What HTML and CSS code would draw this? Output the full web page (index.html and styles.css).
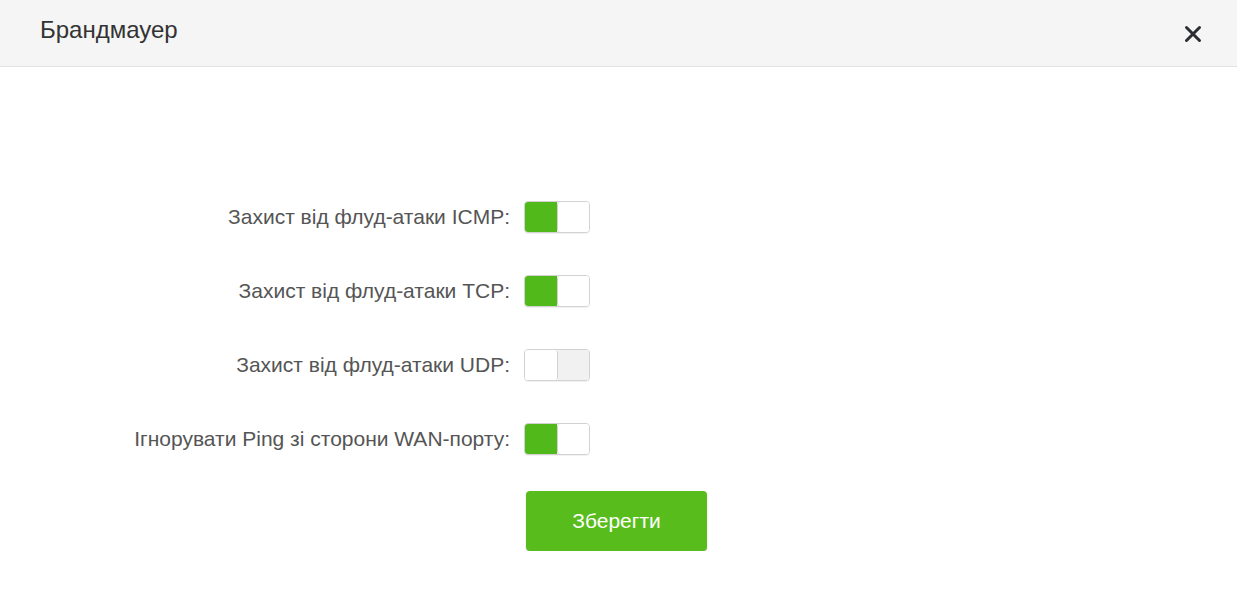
FILE: index.html
```html
<!DOCTYPE html>
<html lang="uk">
<head>
  <meta charset="UTF-8" />
  <title>Брандмауер</title>
  <link rel="stylesheet" href="styles.css">
</head>
<body>
  <div class="dialog">
    <div class="dialog-header">
      <h1 class="dialog-title">Брандмауер</h1>
      <button class="close-btn" aria-label="Закрити">
        <svg width="18" height="18" viewBox="0 0 18 18">
          <path d="M2.5 2.5 L15.5 15.5 M15.5 2.5 L2.5 15.5" stroke="#2b2f33" stroke-width="3" stroke-linecap="round" />
        </svg>
      </button>
    </div>

    <div class="form">
      <label class="form-label">Захист від флуд-атаки ICMP:</label>
      <div class="switch on"><span class="knob-left"></span><span class="knob-right"></span></div>

      <label class="form-label">Захист від флуд-атаки TCP:</label>
      <div class="switch on"><span class="knob-left"></span><span class="knob-right"></span></div>

      <label class="form-label">Захист від флуд-атаки UDP:</label>
      <div class="switch"><span class="knob-left"></span><span class="knob-right"></span></div>

      <label class="form-label">Ігнорувати Ping зі сторони WAN-порту:</label>
      <div class="switch on"><span class="knob-left"></span><span class="knob-right"></span></div>

      <span></span>
      <button class="save-btn">Зберегти</button>
    </div>
  </div>
</body>
</html>
```

FILE: styles.css
```css
body {
  margin: 0;
  font-family: "Liberation Sans", Arial, sans-serif;
  background: #fff;
  color: #333;
}

.dialog-header {
  height: 66px;
  background: #f5f5f5;
  border-bottom: 1px solid #e3e3e3;
  display: flex;
  align-items: center;
  justify-content: space-between;
  padding: 0 35px 0 40px;
}

.dialog-title {
  margin: 0 0 6px;
  font-size: 24px;
  font-weight: normal;
  color: #333;
}

.close-btn {
  border: none;
  background: none;
  padding: 0;
  margin-top: 2px;
  cursor: pointer;
  display: flex;
}

.form {
  display: grid;
  grid-template-columns: 510px auto;
  column-gap: 14px;
  row-gap: 42px;
  align-items: center;
  justify-items: start;
  padding-top: 134px;
}

.form-label {
  justify-self: end;
  font-size: 21px;
  line-height: 24px;
  color: #555;
}

.switch {
  width: 64px;
  height: 30px;
  border: 1px solid #d2d2d2;
  border-radius: 4px;
  display: flex;
  overflow: hidden;
  cursor: pointer;
  box-shadow: 0 1px 1px rgba(0, 0, 0, 0.06);
}

.switch span {
  flex: 1;
}

.switch .knob-left {
  background: #fff;
  border-right: 1px solid #d2d2d2;
  border-radius: 0 3px 3px 0;
}

.switch .knob-right {
  background: #f1f1f1;
}

.switch.on .knob-left {
  background: #52b91b;
  border-right: none;
  border-radius: 0;
}

.switch.on .knob-right {
  background: #fff;
  border-left: 1px solid #d2d2d2;
  border-radius: 3px 0 0 3px;
}

.save-btn {
  margin: -6px 0 0 2px;
  width: 181px;
  height: 60px;
  border: none;
  border-radius: 4px;
  background: #58bd1c;
  box-shadow: 0 1px 2px rgba(0, 0, 0, 0.15);
  color: #fff;
  font-family: "Liberation Sans", Arial, sans-serif;
  font-size: 21px;
  cursor: pointer;
}
```
